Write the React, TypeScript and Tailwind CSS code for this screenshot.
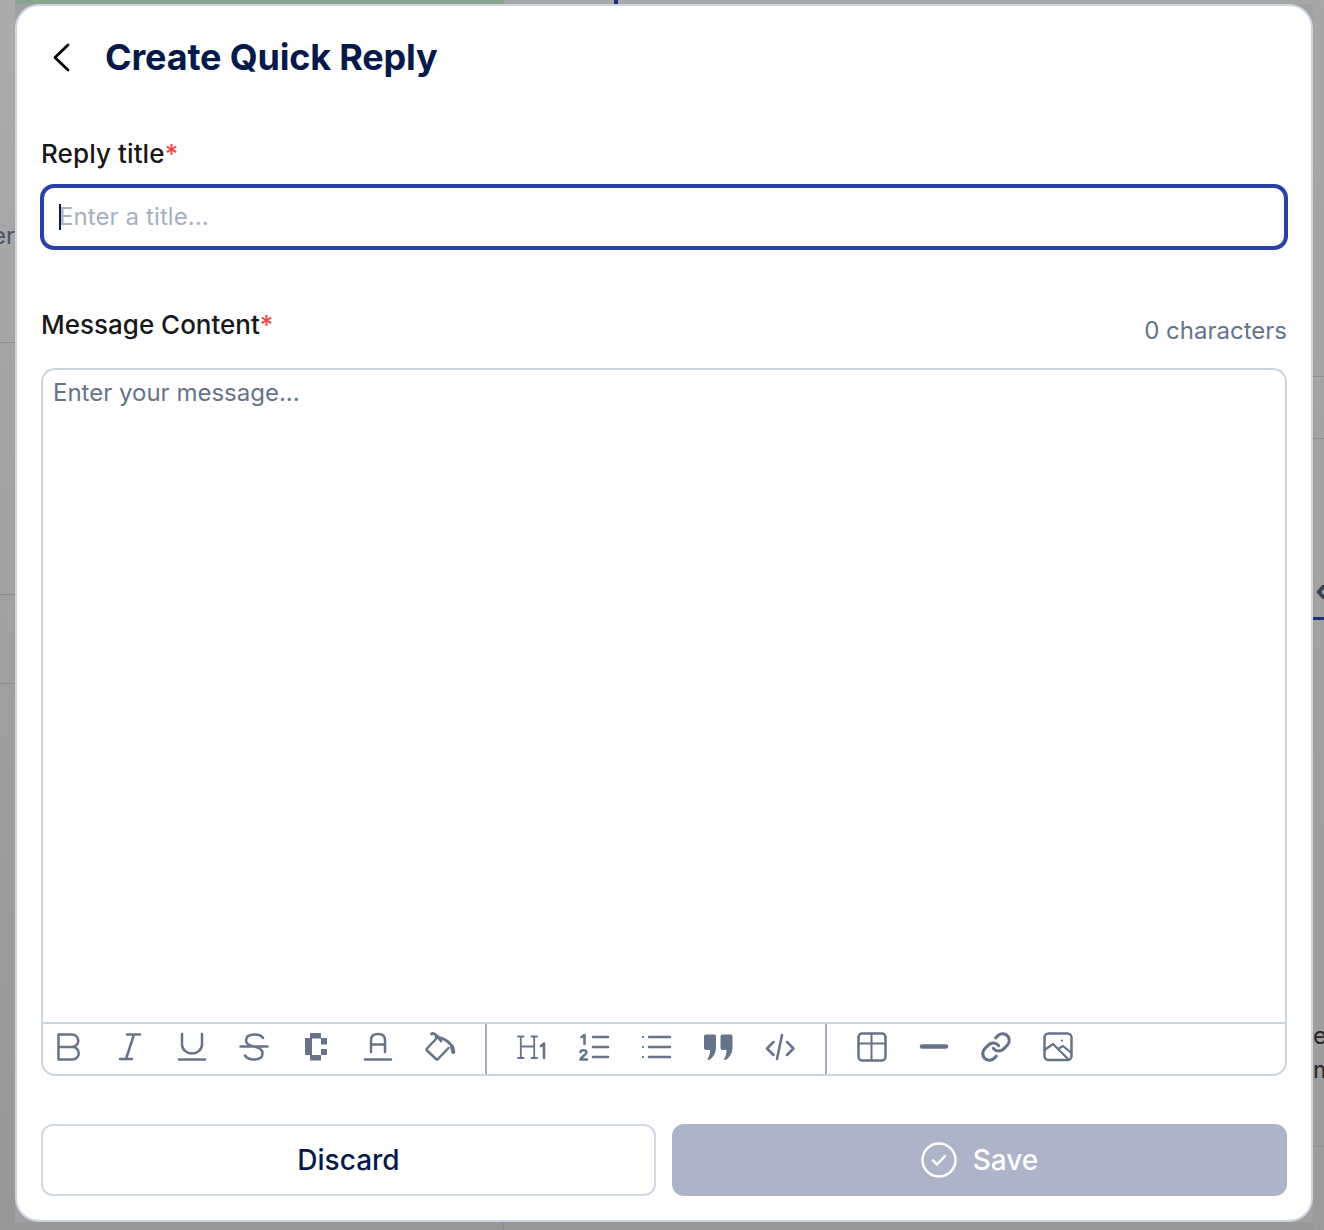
import { Link } from "lucide-react";
import type { ReactNode } from "react";

const inter = "font-['Inter','Liberation_Sans',sans-serif]";

// Toolbar glyphs, all in a 32x32 box.
function Ico({ children }: { children: ReactNode }) {
  return (
    <svg
      viewBox="0 0 32 32"
      className="h-8 w-8 shrink-0 text-[#667389]"
      fill="none"
      stroke="currentColor"
      strokeWidth={2.5}
      strokeLinecap="round"
      strokeLinejoin="round"
    >
      {children}
    </svg>
  );
}

const grupoTexto = [
  <Ico key="b">
    <path d="M6.500 3.500H20a6 6 0 0 1 0 12.500H6.500V3.500ZM6.500 16H20.500a6.200 6.200 0 0 1 0 12.500H6.500V16Z" />
  </Ico>,
  <Ico key="i">
    <path d="M13 3.500H26M20 3.500L12 28M6 28H18" />
  </Ico>,
  <Ico key="u">
    <path d="M6 3V13.500a10 9 0 0 0 20 0V3M3 28.500H29" />
  </Ico>,
  <Ico key="s">
    <path d="M25 7C23.500 4.500 21 3.500 16.500 3.500C11 3.500 8 5.500 8 9.500C8 13 11 14.500 16 15.500M2.500 15.500H29.500M16 15.500C21.500 16.500 24.500 18.500 24.500 22.500C24.500 26.500 21.500 28.500 16 28.500C11.500 28.500 8.500 27 7 24.500" />
  </Ico>,
  <Ico key="c">
    <g fill="currentColor" stroke="none">
      <rect x="5" y="7" width="7" height="17" />
      <rect x="10" y="2" width="11" height="5.500" />
      <rect x="21" y="7" width="6" height="6.500" />
      <rect x="21" y="18" width="6" height="6" />
      <rect x="10" y="24" width="11" height="5.500" />
    </g>
  </Ico>,
  <Ico key="a">
    <path d="M9 21V9C9 5 11.500 3 16 3C20.500 3 23 5 23 9V21M9 13.500H23M3 28.500H29" />
  </Ico>,
  <Ico key="balde">
    <path d="M12 8L3 17.500Q2 18.500 3 19.500L12 28Q13 29 14 28L24.500 17" />
    <path strokeWidth={2.800} d="M7.500 3C9 1.500 11 3 14 6L17 10" />
    <path strokeWidth={2.800} d="M12 6C18 6.500 24 10 27.500 14.500" />
    <path strokeWidth={4} d="M28 15.500L29.300 21" />
  </Ico>,
];

function App() {
  return (
    <div className={`${inter} flex h-[1230px] w-[1324px] overflow-hidden bg-[#a1a1a1]`}>
      {/* Lo que asoma detrás del modal */}
      <aside className="flex h-full w-[15px] shrink-0 flex-col overflow-hidden bg-gradient-to-b from-[#ababab] to-[#979797]">
        <p className="mt-[220px] h-8 -translate-x-[8px] text-[24px] leading-8 text-[#4b5563]">er</p>
        <div className="mt-[90px] h-px bg-[#8f8f8f]" />
        <div className="mt-[251px] h-px bg-[#8f8f8f]" />
        <div className="mt-[88px] h-px bg-[#8f8f8f]" />
      </aside>

      <div className="flex w-[1298px] shrink-0 flex-col">
        <div className="flex h-1 bg-[#a7a7a7]">
          <div className="w-[489px] bg-[#8ba48d]" />
          <div className="ml-[110px] w-1 bg-[#1e2f7d]" />
        </div>

        <main className="flex h-[1218px] shrink-0 flex-col rounded-[24px] border-2 border-[#cbd5e1] bg-white px-6 pt-[23px]">
          <header className="flex h-14 items-center">
            <svg viewBox="0 0 32 32" className="ml-[6px] h-8 w-8 shrink-0 text-black" fill="none" stroke="currentColor" strokeWidth={2.800} strokeLinecap="round" strokeLinejoin="round">
              <path d="M21 4L8 16.500L21 29" />
            </svg>
            <h1 className="ml-[26px] text-[36px] leading-[56px] font-bold tracking-[-0.18px] text-[#051a49]">Create Quick Reply</h1>
          </header>

          <label className="mt-[54px] h-[30px] text-[26px] leading-[30px] font-medium tracking-[0.1px] text-[#18181b]">
            Reply title<span className="text-[#ef4444]">*</span>
          </label>
          <div className="relative mt-[15px] -mx-px h-[66px]">
            <input
              readOnly
              placeholder="Enter a title..."
              className="h-full w-full rounded-[14px] border-4 border-[#2a41a8] bg-white pb-[2px] pl-[15px] text-[24px] tracking-[0.1px] text-[#18181b] outline-none placeholder:text-[#a6b0c0]"
            />
            <span className="absolute top-[20px] left-[19px] h-[26px] w-0.5 bg-[#051a49]" />
          </div>

          <div className="mt-[60px] flex h-[58px] items-start justify-between">
            <label className="h-[30px] text-[26px] leading-[30px] font-medium text-[#18181b]">
              Message Content<span className="text-[#ef4444]">*</span>
            </label>
            <span className="mt-[6px] text-[24px] leading-[30px] text-[#64748b]">0 characters</span>
          </div>

          <section className="flex h-[708px] flex-col rounded-[14px] border-2 border-[#cbd5e1]">
            <div className="flex-1 px-[10px] pt-[8px] text-[24px] leading-[30px] text-[#64748b]">Enter your message...</div>
            <div className="flex h-[52px] items-stretch border-t-2 border-[#cbd5e1]">
              <div className="flex items-center gap-[30px] border-r-2 border-[#9eabbd] pr-[29px] pb-1 pl-[9px]">
                {grupoTexto}
              </div>
              <div className="flex items-center gap-[30px] border-r-2 border-[#9eabbd] pr-[29px] pb-1 pl-[29px]">
                <Ico>
                  <path strokeWidth={1.800} d="M2 5.500H7.500M4.800 5.500V27M2 27H7.500M15.500 5.500H21M18.200 5.500V27M15.500 27H21M4.800 15.500H18.200" />
                  <path strokeWidth={2.600} d="M25 15L28 12.500V27" />
                </Ico>
                <Ico>
                  <path d="M3.500 6L6.500 4V13M15 6H30M15 16H30M15 26H30M2.500 21C3 18.500 8.500 18.500 8.500 21.500C8.500 23.500 3.500 25.500 2.500 28.500H9" />
                </Ico>
                <Ico>
                  <path d="M9 6H30M9 16H30M9 26H30" />
                  <path strokeWidth={2.200} d="M3 6V6.100M3 16V16.100M3 26V26.100" />
                </Ico>
                <Ico>
                  <path
                    fill="currentColor"
                    stroke="none"
                    d="M4 3.500H12.500A1.500 1.500 0 0 1 14 5V16C14 22 11.500 26.500 7 29C6 29.400 5.300 28.500 5.800 27.600C7.300 25 8 22.500 8 19H4A2 2 0 0 1 2 17V5.500A2 2 0 0 1 4 3.500ZM20.500 3.500H29A1.500 1.500 0 0 1 30.500 5V16C30.500 22 28 26.500 23.500 29C22.500 29.400 21.800 28.500 22.300 27.600C23.800 25 24.500 22.500 24.500 19H20.500A2 2 0 0 1 18.500 17V5.500A2 2 0 0 1 20.500 3.500Z"
                  />
                </Ico>
                <Ico>
                  <path d="M9.500 11L3 17.500L9.500 24M23 11L29.500 17.500L23 24M18 4L13 28" />
                </Ico>
              </div>
              <div className="flex items-center gap-[30px] pb-1 pl-[29px]">
                <Ico>
                  <rect x="2.500" y="2.500" width="27" height="27" rx="3.500" />
                  <path strokeWidth={2} d="M2.500 12.500H29.500M15.500 2.500V29.500" />
                </Ico>
                <Ico>
                  <path strokeWidth={4.500} d="M4 15.500H28" />
                </Ico>
                <Link size={32} strokeWidth={2.300} className="shrink-0 text-[#667389]" />
                <Ico>
                  <rect x="2.500" y="2.500" width="27" height="26.500" rx="4" />
                  <path strokeWidth={2.200} d="M2.500 19L11 13L26 28M16 18L21 15L29.500 22" />
                  <path strokeWidth={2.200} d="M20 9.500V9.600" />
                </Ico>
              </div>
            </div>
          </section>

          <footer className="mt-[48px] grid h-[72px] grid-cols-2 gap-4">
            <button type="button" className="rounded-[12px] border-2 border-[#cfd8e3] bg-white text-[28px] font-medium text-[#051a49]">
              Discard
            </button>
            <button type="button" className="flex items-center justify-center gap-4 rounded-[12px] bg-[#acb4c9] text-[28px] font-medium text-white">
              <svg viewBox="0 0 36 36" className="h-9 w-9" fill="none" stroke="currentColor" strokeWidth={2.500} strokeLinecap="round" strokeLinejoin="round">
                <circle cx="18" cy="18" r="16.500" />
                <path d="M12 18.500L16 22.500L24 14" />
              </svg>
              Save
            </button>
          </footer>
        </main>

        <div className="flex h-2 bg-[#979797]">
          <div className="ml-[487px] w-0.5 bg-[#8a8d93]" />
        </div>
      </div>

      <aside className="flex h-full w-[11px] shrink-0 flex-col overflow-hidden bg-gradient-to-b from-[#a7a7a7] to-[#9b9b9b]">
        <div className="mt-[376px] h-px bg-[#8f8f8f]" />
        <div className="mt-[61px] h-px bg-[#8f8f8f]" />
        <div className="mt-[143px] h-[16px] pl-[2px] text-[30px] leading-4 font-bold text-[#374151]">‹</div>
        <div className="mt-[19px] h-[3px] bg-[#1e2f7d]" />
        <p className="mt-[400px] text-[24px] leading-8 text-[#27272a]">e</p>
        <p className="mt-[2px] text-[24px] leading-8 text-[#27272a]">m</p>
        <div className="mt-[60px] h-px bg-[#8f8f8f]" />
      </aside>
    </div>
  );
}

export default App;
